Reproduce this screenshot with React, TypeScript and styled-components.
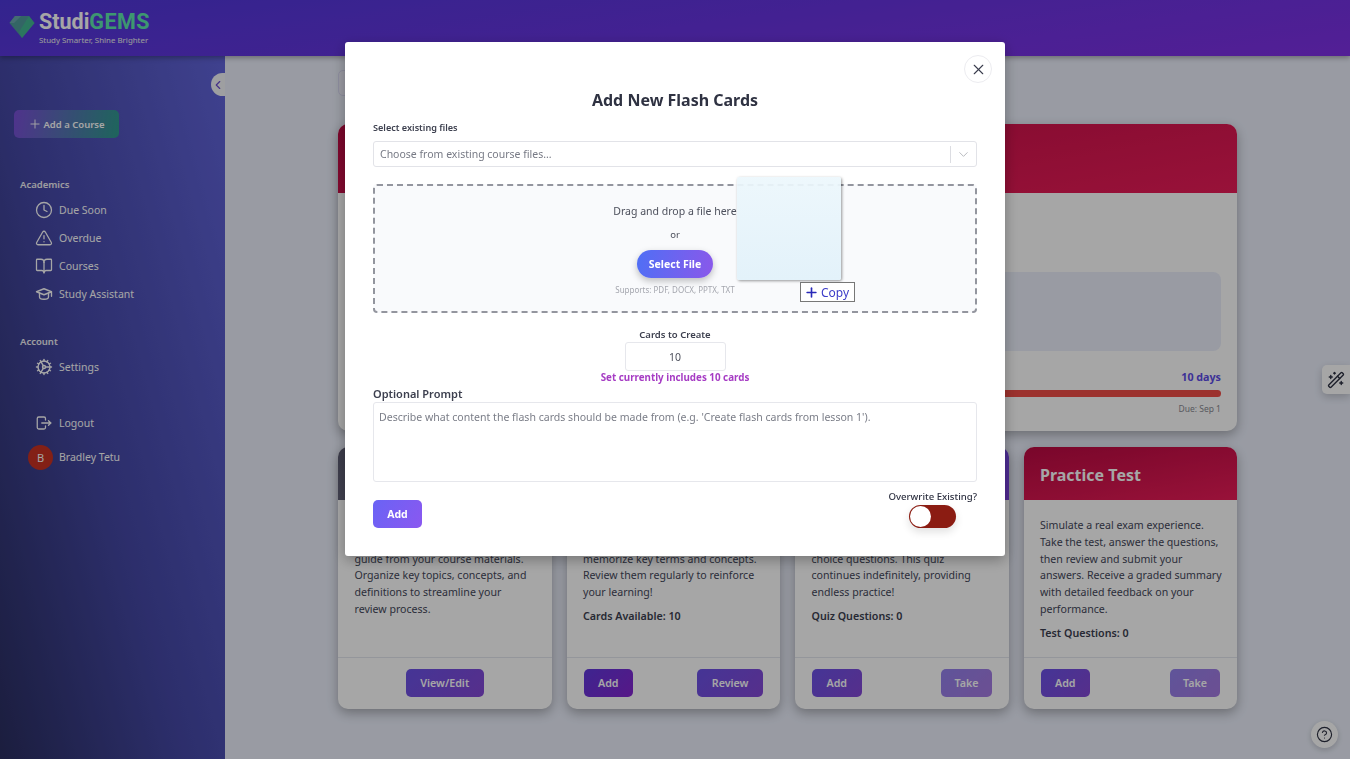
import { createGlobalStyle, styled } from 'styled-components'
import { BookOpen, ChevronDown, ChevronLeft, CircleHelp, Clock, Cog, Plus, TriangleAlert, WandSparkles, X } from 'lucide-react'
import { TbLogout, TbSchool } from 'react-icons/tb'

const Global = createGlobalStyle`
  * { box-sizing: border-box; }
  html, body { margin: 0; padding: 0; height: 100%; }
  body { font-family: "Noto Sans", "Liberation Sans", sans-serif; color: #2d3142; }
`

const nav = [
  { label: 'Due Soon', icon: <Clock size={18} strokeWidth={1.7} /> },
  { label: 'Overdue', icon: <TriangleAlert size={18} strokeWidth={1.7} /> },
  { label: 'Courses', icon: <BookOpen size={18} strokeWidth={1.7} /> },
  { label: 'Study Assistant', icon: <TbSchool size={18} strokeWidth={1.8} /> },
]

const cards = [
  {
    tone: 'slate',
    title: 'Study Guide',
    text: 'Create a comprehensive, tailored and structured, personalized study guide from your course materials. Organize key topics, concepts, and definitions to streamline your\nreview process.',
    stat: '',
    left: '',
    right: 'View/Edit',
  },
  {
    tone: 'violet',
    title: 'Flash Cards',
    text: 'Create flash cards from your course materials to quickly help you memorize key terms and concepts. Review them regularly to reinforce your learning!',
    stat: 'Cards Available: 10',
    left: 'Add',
    right: 'Review',
  },
  {
    tone: 'violet',
    title: 'Quiz',
    text: 'Test your knowledge with an unlimited set of generated multiple choice questions. This quiz continues indefinitely, providing endless practice!',
    stat: 'Quiz Questions: 0',
    left: 'Add',
    right: 'Take',
  },
  {
    tone: 'red',
    title: 'Practice Test',
    text: 'Simulate a real exam experience. Take the test, answer the questions, then review and submit your answers. Receive a graded summary with detailed feedback on your performance.',
    stat: 'Test Questions: 0',
    left: 'Add',
    right: 'Take',
  },
]

const Gem = () => (
  <svg width="26" height="24" viewBox="0 0 26 24">
    <polygon points="6,1 20,1 25.5,8 13,23 0.5,8" fill="#4f9c9c" />
    <polygon points="20,1 25.5,8 13,23 10,17" fill="#3fc08f" opacity="0.75" />
    <polygon points="6,1 12,1 5,8 0.5,8" fill="#6aa6b0" />
  </svg>
)

const App = () => {
  return (
    <Page>
      <Global />
      <Header>
        <Gem />
        <Brand>
          <BrandName>Studi<em>GEMS</em></BrandName>
          <Tagline>Study Smarter, Shine Brighter</Tagline>
        </Brand>
      </Header>
      <Body>
        <Sidebar>
          <Collapse><ChevronLeft size={16} /></Collapse>
          <AddCourse><Plus size={14} strokeWidth={1.6} />Add a Course</AddCourse>
          <SectionTitle>Academics</SectionTitle>
          {nav.map(({ label, icon }) => (
            <NavItem key={label}>{icon}<span>{label}</span></NavItem>
          ))}
          <SectionTitle $account>Account</SectionTitle>
          <NavItem><Cog size={18} strokeWidth={1.9} /><span>Settings</span></NavItem>
          <Logout><TbLogout size={18} strokeWidth={1.7} /><span>Logout</span></Logout>
          <User><Avatar>B</Avatar><span>Bradley Tetu</span></User>
        </Sidebar>
        <Main>
          <Tab />
          <TopCard>
            <CardHead $tone="red" $tall />
            <TopBody>
              <Placeholder />
              <Days>10 days</Days>
              <Bar />
              <Due>Due: Sep 1</Due>
            </TopBody>
          </TopCard>
          <CardRow>
            {cards.map(({ tone, title, text, stat, left, right }) => (
              <Card key={title}>
                <CardHead $tone={tone}><CardTitle>{title}</CardTitle></CardHead>
                <CardBody>
                  <CardText>{text}</CardText>
                  {stat && <Stat>{stat}</Stat>}
                </CardBody>
                <CardFoot $center={!left}>
                  {left && <ActionButton $dark={title === 'Flash Cards'}>{left}</ActionButton>}
                  <ActionButton $muted={right === 'Take'}>{right}</ActionButton>
                </CardFoot>
              </Card>
            ))}
          </CardRow>
        </Main>
      </Body>
      <WandTab><WandSparkles size={18} strokeWidth={1.8} /></WandTab>
      <HelpButton><CircleHelp size={17} strokeWidth={1.6} /></HelpButton>
      <Overlay>
        <Modal>
          <CloseButton><X size={17} strokeWidth={1.6} /></CloseButton>
          <ModalTitle>Add New Flash Cards</ModalTitle>
          <FieldLabel>Select existing files</FieldLabel>
          <SelectBox>
            <span>Choose from existing course files...</span>
            <SelectArrow><ChevronDown size={15} strokeWidth={1.5} /></SelectArrow>
          </SelectBox>
          <DropZone>
            <DropText>Drag and drop a file here</DropText>
            <OrText>or</OrText>
            <SelectFile>Select File</SelectFile>
            <Supports>Supports: PDF, DOCX, PPTX, TXT</Supports>
            <DragGhost />
            <CopyTag><Plus size={15} strokeWidth={2.6} color="#2a2ab8" />Copy</CopyTag>
          </DropZone>
          <CountBlock>
            <CountLabel>Cards to Create</CountLabel>
            <CountInput defaultValue="10" />
            <CountNote>Set currently includes 10 cards</CountNote>
          </CountBlock>
          <PromptLabel>Optional Prompt</PromptLabel>
          <Prompt placeholder="Describe what content the flash cards should be made from (e.g. 'Create flash cards from lesson 1')." />
          <ModalFoot>
            <AddButton>Add</AddButton>
            <Overwrite>
              <OverwriteLabel>Overwrite Existing?</OverwriteLabel>
              <Toggle><Knob /></Toggle>
            </Overwrite>
          </ModalFoot>
        </Modal>
      </Overlay>
    </Page>
  )
}

export default App

const Page = styled.div`
  width: 100%;
  height: 100vh;
  overflow: hidden;
  display: flex;
  flex-direction: column;
  background: #ebeffb;
`

const Header = styled.header`
  height: 56px;
  flex: none;
  display: flex;
  align-items: center;
  gap: 4px;
  padding: 0 0 2px 9px;
  background: linear-gradient(172deg, #4e38da 0%, #8030e6 100%);
  box-shadow: 0 2px 5px rgba(0, 0, 0, 0.3);
  position: relative;
  z-index: 2;
`

const Brand = styled.div`
  display: flex;
  flex-direction: column;
`

const BrandName = styled.div`
  font-family: "Roboto", sans-serif;
  font-size: 21.5px;
  line-height: 25px;
  font-weight: 700;
  color: #fff;

  em {
    font-style: normal;
    color: #5fe8ac;
    letter-spacing: 0.4px;
  }
`

const Tagline = styled.div`
  font-size: 7.9px;
  line-height: 12px;
  color: #eee;
`

const Body = styled.div`
  flex: 1;
  display: flex;
  min-height: 0;
`

const Sidebar = styled.aside`
  position: relative;
  width: 225px;
  flex: none;
  padding: 54px 0 0 14px;
  background: linear-gradient(75deg, #2a2e60 0%, #4548a6 45%, #6265dc 100%);
  color: #fff;
`

const Collapse = styled.div`
  position: absolute;
  top: 17px;
  right: 0;
  width: 14px;
  height: 23px;
  border-radius: 12px 0 0 12px;
  background: #f3f4f8;
  color: #6a4bd0;
  display: flex;
  align-items: center;
  justify-content: flex-end;
`

const AddCourse = styled.div`
  width: 105px;
  height: 28px;
  border-radius: 5px;
  display: flex;
  align-items: center;
  justify-content: center;
  gap: 1px;
  font-size: 9.5px;
  font-weight: 600;
  color: #fff;
  background: linear-gradient(100deg, #7a4fd8 0%, #2f9c8e 100%);
`

const SectionTitle = styled.div<{ $account?: boolean }>`
  margin: ${({ $account }) => ($account ? '27px' : '40px')} 0 4px 6px;
  font-size: 9.5px;
  line-height: 14px;
  font-weight: 600;
  color: #f1f1f6;
`

const NavItem = styled.div`
  height: 28px;
  display: flex;
  align-items: center;
  gap: 6px;
  padding-left: 21px;
  font-size: 10.5px;
  color: #fff;
`

const Logout = styled(NavItem)`
  margin-top: 28px;
`

const User = styled(NavItem)`
  margin-top: 6px;
  padding-left: 14px;
  gap: 6px;
`

const Avatar = styled.div`
  width: 25px;
  height: 25px;
  border-radius: 50%;
  background: #c93222;
  display: flex;
  align-items: center;
  justify-content: center;
  font-size: 11px;
`

const Main = styled.main`
  flex: 1;
  min-width: 0;
  padding: 14px 113px 0;
`

const Tab = styled.div`
  width: 60px;
  height: 26px;
  border: 1px solid #d8d8f2;
  border-radius: 5px;
  background: #eeeefb;
`

const TopCard = styled.section`
  margin-top: 28px;
  height: 307px;
  border-radius: 10px;
  overflow: hidden;
  background: #fff;
  box-shadow: 0 4px 12px rgba(0, 0, 0, 0.3);
`

const headTones: Record<string, string> = {
  red: 'linear-gradient(170deg, #bb0a42 0%, #ea1c58 100%)',
  violet: 'linear-gradient(170deg, #6e4fe8 0%, #7d3fe0 100%)',
  slate: 'linear-gradient(170deg, #5c5c72 0%, #6a6a80 100%)',
}

const CardHead = styled.div<{ $tone: string; $tall?: boolean }>`
  height: ${({ $tall }) => ($tall ? '69px' : '53px')};
  display: flex;
  align-items: center;
  padding: 3px 16.5px 0;
  background: ${({ $tone }) => headTones[$tone]};
`

const TopBody = styled.div`
  padding: 79px 16px 0;
  display: flex;
  flex-direction: column;
  align-items: flex-end;
`

const Placeholder = styled.div`
  width: 100%;
  height: 79px;
  border-radius: 8px;
  background: #ebeffb;
`

const Days = styled.div`
  margin-top: 19px;
  font-size: 10.7px;
  line-height: 14px;
  font-weight: 700;
  color: #5c4be8;
`

const Bar = styled.div`
  width: 100%;
  height: 7px;
  margin-top: 6px;
  border-radius: 4px;
  background: #f04d47;
`

const Due = styled.div`
  margin-top: 6px;
  font-size: 8.5px;
  line-height: 12px;
  color: #8a8a92;
`

const CardRow = styled.div`
  margin-top: 16px;
  display: grid;
  grid-template-columns: repeat(4, 1fr);
  gap: 15px;
`

const Card = styled.article`
  height: 262px;
  border-radius: 10px;
  overflow: hidden;
  display: flex;
  flex-direction: column;
  background: #fff;
  box-shadow: 0 4px 12px rgba(0, 0, 0, 0.3);
`

const CardTitle = styled.h3`
  margin: 0;
  font-size: 16px;
  font-weight: 700;
  color: #fff;
`

const CardBody = styled.div`
  flex: 1;
  padding: 17px 14px 0 16.5px;
`

const CardText = styled.p`
  margin: 0;
  font-size: 10.6px;
  line-height: 16.8px;
  white-space: pre-line;
  color: #44475a;
`

const Stat = styled.div`
  margin-top: 7px;
  font-size: 10.7px;
  line-height: 16px;
  font-weight: 600;
  color: #3b3e50;
`

const CardFoot = styled.div<{ $center?: boolean }>`
  height: 52px;
  flex: none;
  display: flex;
  align-items: center;
  justify-content: ${({ $center }) => ($center ? 'center' : 'space-between')};
  padding: 0 17px 2px;
  border-top: 1px solid #e4e6ee;
`

const ActionButton = styled.div<{ $dark?: boolean; $muted?: boolean }>`
  height: 28px;
  padding: 0 ${({ $muted }) => ($muted ? '13px' : '14.5px')};
  border-radius: 5px;
  display: flex;
  align-items: center;
  font-size: 10.7px;
  font-weight: 600;
  color: #fff;
  opacity: ${({ $muted }) => ($muted ? 0.72 : 1)};
  background: ${({ $dark }) =>
    $dark
      ? 'linear-gradient(135deg, #5f39dc 0%, #8624d0 100%)'
      : 'linear-gradient(135deg, #6a52e6 0%, #8548d6 100%)'};
`

const WandTab = styled.div`
  position: fixed;
  right: 0;
  top: 365px;
  width: 28px;
  height: 29px;
  border-radius: 5px 0 0 5px;
  background: #fff;
  box-shadow: 0 3px 8px rgba(0, 0, 0, 0.2);
  display: flex;
  align-items: center;
  justify-content: center;
  color: #2d3142;
`

const HelpButton = styled.div`
  position: fixed;
  left: 1311px;
  top: 721px;
  width: 27px;
  height: 27px;
  border-radius: 50%;
  background: #fff;
  box-shadow: 0 2px 6px rgba(0, 0, 0, 0.2);
  display: flex;
  align-items: center;
  justify-content: center;
  color: #2d3142;
`

const Overlay = styled.div`
  position: fixed;
  inset: 0;
  z-index: 10;
  background: rgba(0, 0, 0, 0.35);
`

const Modal = styled.div`
  position: absolute;
  left: 345px;
  top: 42px;
  width: 660px;
  height: 514px;
  padding: 47px 28px 0;
  background: #fff;
  border-radius: 3px;
  box-shadow: 0 4px 14px rgba(0, 0, 0, 0.3);
  display: flex;
  flex-direction: column;
`

const CloseButton = styled.div`
  position: absolute;
  top: 13px;
  right: 13px;
  width: 28px;
  height: 28px;
  border-radius: 50%;
  border: 1px solid #ececf0;
  display: flex;
  align-items: center;
  justify-content: center;
  color: #3a3d4d;
`

const ModalTitle = styled.h2`
  margin: 0;
  text-align: center;
  font-size: 16px;
  line-height: 22px;
  font-weight: 700;
  color: #2f3242;
`

const FieldLabel = styled.div`
  margin-top: 11px;
  font-size: 9.1px;
  line-height: 12px;
  font-weight: 600;
  color: #3d404f;
`

const SelectBox = styled.div`
  margin-top: 7px;
  height: 26px;
  flex: none;
  border: 1px solid #e2e3e8;
  border-radius: 3px;
  display: flex;
  align-items: center;
  justify-content: space-between;
  padding-left: 6px;
  font-size: 10.5px;
  color: #777a85;
`

const SelectArrow = styled.div`
  height: 17px;
  width: 26px;
  border-left: 1px solid #dcdde2;
  display: flex;
  align-items: center;
  justify-content: center;
  color: #b4b6bc;
`

const DropZone = styled.div`
  position: relative;
  margin-top: 17px;
  height: 129px;
  flex: none;
  border: 2px dashed #93959e;
  border-radius: 4px;
  background: #f9fafc;
  display: flex;
  flex-direction: column;
  align-items: center;
  padding-top: 18px;
`

const DropText = styled.div`
  font-size: 10.5px;
  line-height: 14px;
  color: #4d505c;
`

const OrText = styled.div`
  margin-top: 10px;
  font-size: 9.5px;
  line-height: 14px;
  color: #4d505c;
`

const SelectFile = styled.div`
  margin-top: 8px;
  width: 76px;
  height: 28px;
  border-radius: 14px;
  display: flex;
  align-items: center;
  justify-content: center;
  font-size: 10.5px;
  font-weight: 700;
  color: #fff;
  background: linear-gradient(100deg, #4f6ff5 0%, #8a58ea 100%);
  box-shadow: 0 3px 7px rgba(0, 0, 0, 0.25);
`

const Supports = styled.div`
  margin-top: 6px;
  font-size: 8px;
  line-height: 12px;
  color: #a4a6ae;
`

const DragGhost = styled.div`
  position: absolute;
  left: 362px;
  top: -9px;
  width: 104px;
  height: 103px;
  border-radius: 2px;
  background: linear-gradient(180deg, rgba(236, 247, 252, 0.92) 0%, #e3f2fa 100%);
  box-shadow: 1px 1px 3px rgba(0, 0, 0, 0.4);
`

const CopyTag = styled.div`
  position: absolute;
  left: 425px;
  top: 96px;
  width: 55px;
  height: 20px;
  border: 1px solid #777;
  background: #fff;
  display: flex;
  align-items: center;
  gap: 2px;
  padding-left: 3px;
  font-size: 12px;
  color: #3b3bc8;
`

const CountBlock = styled.div`
  margin-top: 15px;
  display: flex;
  flex-direction: column;
  align-items: center;
`

const CountLabel = styled.div`
  font-size: 9.5px;
  line-height: 13px;
  font-weight: 600;
  color: #3d404f;
`

const CountInput = styled.input`
  margin-top: 1px;
  width: 101px;
  height: 29px;
  border: 1px solid #e6e7ec;
  border-radius: 3px;
  text-align: center;
  font-family: inherit;
  font-size: 10.5px;
  color: #4d505c;
  outline: none;
`

const CountNote = styled.div`
  margin-top: 0;
  font-size: 9.8px;
  line-height: 13px;
  font-weight: 700;
  color: #a63cc4;
`

const PromptLabel = styled.div`
  margin-top: 2px;
  font-size: 11px;
  line-height: 15px;
  font-weight: 600;
  color: #3d404f;
`

const Prompt = styled.textarea`
  margin-top: 1px;
  height: 80px;
  flex: none;
  resize: none;
  border: 1px solid #e6e7ec;
  border-radius: 3px;
  padding: 7px 5px;
  font-family: inherit;
  font-size: 10.55px;
  line-height: 14px;
  outline: none;

  &::placeholder {
    color: #7b7e88;
    opacity: 1;
  }
`

const ModalFoot = styled.div`
  margin-top: 8px;
  display: flex;
  align-items: flex-start;
  justify-content: space-between;
`

const AddButton = styled.div`
  margin-top: 10px;
  width: 49px;
  height: 28px;
  border-radius: 5px;
  display: flex;
  align-items: center;
  justify-content: center;
  font-size: 10.5px;
  font-weight: 700;
  color: #fff;
  background: linear-gradient(120deg, #6a63f5 0%, #8a58f0 100%);
`

const Overwrite = styled.div`
  display: flex;
  flex-direction: column;
  align-items: center;
`

const OverwriteLabel = styled.div`
  font-size: 9.6px;
  line-height: 14px;
  font-weight: 500;
  color: #2f3242;
`

const Toggle = styled.div`
  margin-top: 1px;
  width: 47px;
  height: 23px;
  border-radius: 12px;
  background: #8b1c12;
  padding: 1px;
  box-shadow: 0 4px 8px rgba(0, 0, 0, 0.12);
`

const Knob = styled.div`
  width: 21px;
  height: 21px;
  border-radius: 50%;
  background: #fff;
`
